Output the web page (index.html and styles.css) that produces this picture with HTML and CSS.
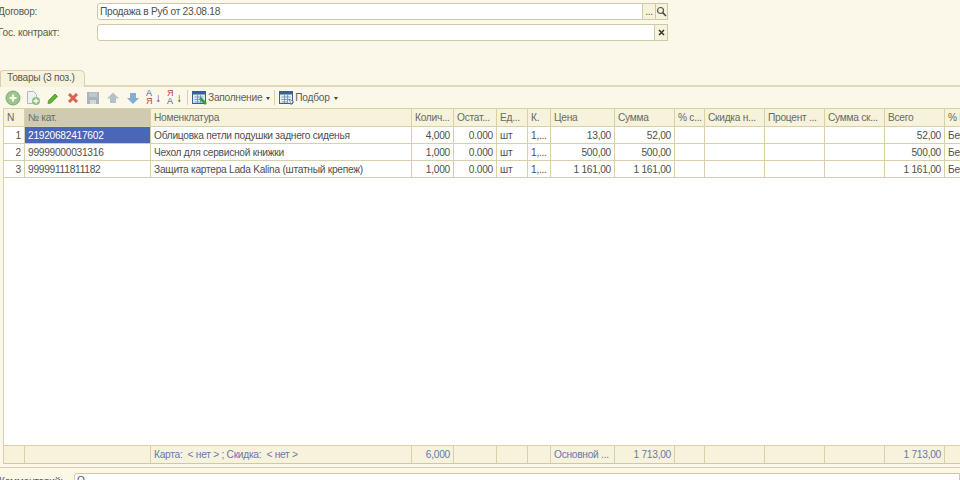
FILE: index.html
```html
<!DOCTYPE html>
<html lang="ru">
<head>
<meta charset="utf-8">
<title>Товары</title>
<link rel="stylesheet" href="styles.css">
</head>
<body>
<div class="form">
  <div class="field-row">
    <label class="field-label">Договор:</label>
    <div class="input wide">Продажа в Руб от 23.08.18</div>
    <span class="btn dots">...</span>
    <span class="btn narrow"><svg width="11" height="11" viewBox="0 0 11 11"><circle cx="4.5" cy="4.5" r="3" fill="none" stroke="#555" stroke-width="1.2"/><path d="M6.8 6.8L10 10" stroke="#444" stroke-width="1.6"/></svg></span>
  </div>
  <div class="field-row">
    <label class="field-label">Гос. контракт:</label>
    <div class="input wider"></div>
    <span class="btn"><svg width="9" height="9" viewBox="0 0 9 9"><path d="M2 2L7 7M7 2L2 7" stroke="#333" stroke-width="1.5"/></svg></span>
  </div>
</div>

<div class="tabs"><div class="tab">Товары (3 поз.)</div></div>

<div class="toolbar">
  <svg class="tool" width="16" height="16" viewBox="0 0 16 16"><circle cx="8" cy="8" r="7" fill="#9cc48c" stroke="#7fa97a"/><path d="M8 4.500v7M4.500 8h7" stroke="#f4fbe8" stroke-width="2.2"/></svg>
  <svg class="tool" width="16" height="16" viewBox="0 0 16 16"><path d="M2.500 1.500h6l3 3v9h-9z" fill="#f0f2f0" stroke="#aeb8be"/><circle cx="11" cy="11" r="4" fill="#92bf86"/><path d="M11 8.500v5M8.500 11h5" stroke="#fff" stroke-width="1.300"/></svg>
  <svg class="tool" width="16" height="16" viewBox="0 0 16 16"><path d="M3.500 10.500L10 4l2.500 2.500L6 13l-3 .5z" fill="#62b236" stroke="#4a9428" stroke-width=".8"/></svg>
  <svg class="tool" width="16" height="16" viewBox="0 0 16 16"><path d="M4 4l8 8M12 4l-8 8" stroke="#e2604f" stroke-width="3"/></svg>
  <svg class="tool" width="16" height="16" viewBox="0 0 16 16"><rect x="2" y="2" width="12" height="12" fill="#aab3b9"/><rect x="4" y="2.500" width="8" height="4.500" fill="#c0c7cb"/><rect x="5" y="10" width="6" height="4" fill="#d3d7d8"/></svg>
  <svg class="tool" width="16" height="16" viewBox="0 0 16 16"><path d="M8 2.500L14 8.500h-3v4.500H5V8.500H2z" fill="#b5c2c4"/></svg>
  <svg class="tool" width="16" height="16" viewBox="0 0 16 16"><path d="M8 14L14 8h-3V3H5v5H2z" fill="#7faed6"/></svg>
  <span class="sort"><span class="sort-top-blue">А</span><span class="sort-bottom-red">Я</span><i class="sort-arrow">↓</i></span>
  <span class="sort"><span class="sort-top-red">Я</span><span class="sort-bottom-blue">А</span><i class="sort-arrow">↓</i></span>
  <span class="sep"></span>
  <svg class="tool-i" width="16" height="16" viewBox="0 0 16 16"><rect x=".5" y="1.500" width="13" height="12" fill="#dfe9f2" stroke="#3b5f98"/><rect x=".5" y="1.500" width="13" height="3" fill="#3b5f98"/><path d="M2.500 7h9M2.500 9.500h9M2.500 12h9M5.500 5v8M8.500 5v8" stroke="#6d8cb5" stroke-width=".8"/><path d="M8 8l6 6" stroke="#2f9e3a" stroke-width="2.500"/></svg>
  <span class="tool-text">Заполнение</span><span class="caret"></span>
  <span class="sep"></span>
  <svg class="tool-i" width="16" height="16" viewBox="0 0 16 16"><rect x=".5" y="1.500" width="13" height="12" fill="#e6edf5" stroke="#3b5f98"/><rect x=".5" y="1.500" width="13" height="3" fill="#3b5f98"/><path d="M2.500 7h9M2.500 9.500h9M2.500 12h6M5.500 5v8M8.500 5v8" stroke="#6d8cb5" stroke-width=".8"/><path d="M10 9l5 3-2 .8-.8 2z" fill="#f4f4f4" stroke="#555" stroke-width=".6"/></svg>
  <span class="tool-text">Подбор</span><span class="caret"></span>
</div>

<div class="table">
  <div class="row head">
    <div class="c">N</div><div class="c cur">№ кат.</div><div class="c">Номенклатура</div><div class="c">Колич...</div><div class="c">Остат...</div><div class="c">Ед...</div><div class="c">К.</div><div class="c">Цена</div><div class="c">Сумма</div><div class="c">% с...</div><div class="c">Скидка н...</div><div class="c">Процент ...</div><div class="c">Сумма ск...</div><div class="c">Всего</div><div class="c">% Н</div>
  </div>
  <div class="row">
    <div class="c r">1</div><div class="c sel">21920682417602</div><div class="c">Облицовка петли подушки заднего сиденья</div><div class="c r">4,000</div><div class="c r">0.000</div><div class="c">шт</div><div class="c">1,...</div><div class="c r">13,00</div><div class="c r">52,00</div><div class="c"></div><div class="c"></div><div class="c"></div><div class="c"></div><div class="c r">52,00</div><div class="c">Без</div>
  </div>
  <div class="row">
    <div class="c r">2</div><div class="c">99999000031316</div><div class="c">Чехол для сервисной книжки</div><div class="c r">1,000</div><div class="c r">0.000</div><div class="c">шт</div><div class="c">1,...</div><div class="c r">500,00</div><div class="c r">500,00</div><div class="c"></div><div class="c"></div><div class="c"></div><div class="c"></div><div class="c r">500,00</div><div class="c">Без</div>
  </div>
  <div class="row">
    <div class="c r">3</div><div class="c">99999111811182</div><div class="c">Защита картера Lada Kalina (штатный крепеж)</div><div class="c r">1,000</div><div class="c r">0.000</div><div class="c">шт</div><div class="c">1,...</div><div class="c r">1 161,00</div><div class="c r">1 161,00</div><div class="c"></div><div class="c"></div><div class="c"></div><div class="c"></div><div class="c r">1 161,00</div><div class="c">Без</div>
  </div>
  <div class="filler"></div>
  <div class="row foot">
    <div class="c"></div><div class="c"></div><div class="c">Карта: &nbsp;&lt; нет &gt; ; Скидка: &nbsp;&lt; нет &gt;</div><div class="c r">6,000</div><div class="c"></div><div class="c"></div><div class="c"></div><div class="c">Основной ...</div><div class="c r">1 713,00</div><div class="c"></div><div class="c"></div><div class="c"></div><div class="c"></div><div class="c r">1 713,00</div><div class="c"></div>
  </div>
</div>

<div class="divider"></div>
<div class="comment">
  <label class="comment-label">Комментарий:</label>
  <div class="comment-input">О</div>
</div>
</body>
</html>
```
FILE: styles.css
```css
* { box-sizing: border-box; }
html, body { margin: 0; height: 480px; overflow: hidden; }
body {
  width: 960px;
  background: #fbf8e9;
  color: #5c5c50;
  font-family: Tahoma, "Liberation Sans", sans-serif;
  font-size: 10.2px;
  letter-spacing: -0.27px;
  display: flex;
  flex-direction: column;
}
.form { height: 70px; padding-top: 2px; flex: none; }
.field-row { display: flex; height: 17px; margin-bottom: 4px; margin-top: 1px; align-items: stretch; }
.field-label { width: 96px; margin-left: -2px; flex: none; line-height: 17px; margin-right: 3px; }
.input {
  background: #fff;
  border: 1px solid #cfc8a4;
  border-radius: 3px 0 0 3px;
  padding-left: 2px;
  line-height: 15px;
  color: #50504a;
}
.wide { width: 546px; }
.wider { width: 558px; }
.btn {
  width: 13px;
  background: #f6f2dc;
  border: 1px solid #cfc8a4;
  border-left: 0;
  display: flex;
  align-items: center;
  justify-content: center;
}
.narrow { width: 12px; }
.dots { line-height: 17px; }
.tabs { height: 17px; border-bottom: 2px solid #e0d9b8; flex: none; display: flex; }
.tab {
  width: 85px;
  height: 17px;
  background: #f6f2dc;
  border: 1px solid #d8d0a8;
  border-bottom: 0;
  border-radius: 3px 5px 0 0;
  padding-left: 6px;
  line-height: 14px;
}
.toolbar {
  height: 21px;
  flex: none;
  display: flex;
  align-items: center;
  padding-left: 5px;
  color: #5f5f54;
}
.tool { margin-right: 4px; flex: none; }
.tool-i { flex: none; }
.sort {
  position: relative;
  width: 16px;
  height: 18px;
  margin-right: 5px;
  flex: none;
  font-size: 9px;
  line-height: 8.5px;
  letter-spacing: 0;
  padding-left: 1px;
}
.sort span { display: block; }
.sort-top-blue, .sort-bottom-blue { color: #3c5f9e; }
.sort-top-red, .sort-bottom-red { color: #b5463c; }
.sort-arrow {
  position: absolute;
  right: 0;
  top: 2px;
  font-style: normal;
  font-size: 12px;
  line-height: 14px;
  color: #444;
}
.sep { width: 1px; height: 15px; background: #d8d0a8; margin-right: 4px; flex: none; }
.caret {
  width: 0;
  height: 0;
  border: 2.5px solid transparent;
  border-top: 3px solid #444;
  border-bottom: 0;
  margin: 1px 4px 0 4px;
  flex: none;
}
.table {
  margin-left: 3px;
  height: 356px;
  flex: none;
  border-top: 1px solid #d8d0a8;
  border-left: 1px solid #d8d0a8;
  border-bottom: 1px solid #cfc8a4;
  display: flex;
  flex-direction: column;
  background: #fff;
}
.row {
  display: grid;
  grid-template-columns: 21px 126px 261px 42px 43px 31px 23px 64px 60px 30px 60px 60px 60px 60px 60px;
  height: 17px;
  flex: none;
  border-bottom: 1px solid #d8d0a8;
}
.c {
  border-right: 1px solid #d8d0a8;
  padding: 0 3px;
  line-height: 18px;
  white-space: nowrap;
  overflow: hidden;
  color: #50504a;
}
.r { text-align: right; }
.head { height: 18px; background: #f6f2dc; }
.head .c { line-height: 17px; color: #6a6a5e; }
.head .cur { background: #d0cbb0; }
.c.sel { background: #4a66b8; color: #fff; }
.filler { flex: 1; background: #fff; }
.foot { height: 18px; background: #f6f2dc; border-top: 1px solid #d8d0a8; border-bottom: 0; }
.foot .c { color: #6a78ac; line-height: 17px; }
.divider { height: 4px; flex: none; border-bottom: 1px solid #d8d0a8; }
.comment { display: flex; flex: none; margin-top: 5px; height: 10px; }
.comment-label { width: 75px; margin-left: -1px; flex: none; line-height: 17px; }
.comment-input {
  flex: 1;
  border: 1px solid #cfc8a4;
  border-radius: 3px 0 0 0;
  background: #fff;
  padding-left: 2px;
  line-height: 13px;
}
```
